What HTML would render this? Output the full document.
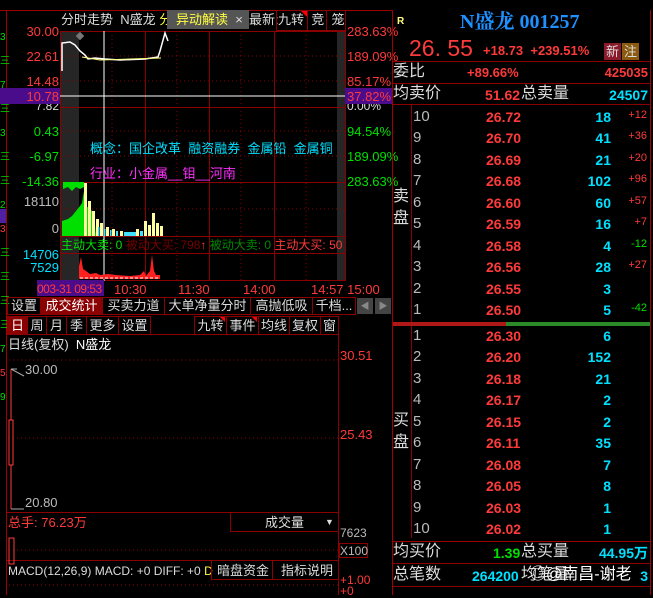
<!DOCTYPE html>
<html><head><meta charset="utf-8"><style>
*{margin:0;padding:0;box-sizing:border-box}
body{width:653px;height:595px;background:#000;overflow:hidden;position:relative;font-family:"Liberation Sans","Noto Sans CJK SC",sans-serif;font-size:13px;color:#ccc}
.a{position:absolute;white-space:nowrap;line-height:1}
.r{color:#ff3a3a}.c{color:#00e0ff}.g{color:#00e000}.w{color:#ddd}.y{color:#ffff40}.m{color:#ff30ff}
.hl{position:absolute;height:1px;background:#8b0000}
.vl{position:absolute;width:1px;background:#8b0000}
.bx{position:absolute;border:1px solid #8b0000}
.tab{position:absolute;top:297px;height:18px;border:1px solid #8b0000;color:#ddd;font-size:13px;line-height:16px;text-align:center}
.t2{position:absolute;top:316px;height:19px;border:1px solid #8b0000;color:#ddd;font-size:13px;line-height:17px;text-align:center}
.row{position:absolute;left:393px;width:258px;height:21px;font-size:14px;font-weight:bold}
.row span{position:absolute;top:3px;line-height:1}
.row span.w{color:#bbb;font-weight:normal;font-size:15px;top:2px}
.lb{position:absolute;left:0;width:59px;text-align:right;font-size:13px;line-height:1}
.rb{position:absolute;left:347px;font-size:13px;line-height:1}
</style></head><body>
<div class="vl" style="left:6px;top:10px;height:585px;background:#a00000"></div>
<div class="hl" style="left:0;top:10px;width:393px;background:#a00000"></div>
<div class="a g" style="left:0;top:26px;font-size:10px;line-height:24px">3<br>三<br>7<br>三<br>3<br>三<br>三<br>2<br><span class="r">3</span><br>三<br>三<br>三<br>三<br>7<br><span class="r">5</span><br>9</div>
<div class="a" style="left:0;top:209px;width:6px;height:14px;background:#5020a0"></div>
<div class="a" style="left:61px;top:31px;width:18px;height:249px;background:#262626"></div>
<div class="a" style="left:337px;top:31px;width:8px;height:249px;background:#262626"></div>
<div class="bx" style="left:60px;top:31px;width:286px;height:250px"></div>
<div class="hl" style="left:60px;top:107px;width:286px"></div>
<div class="hl" style="left:60px;top:182px;width:286px"></div>
<div class="hl" style="left:60px;top:236px;width:286px"></div>
<div class="hl" style="left:60px;top:253px;width:286px"></div>
<div class="vl" style="left:145px;top:31px;height:250px"></div>
<div class="vl" style="left:209px;top:31px;height:250px"></div>
<div class="vl" style="left:274px;top:31px;height:250px"></div>
<svg class="a" style="left:60px;top:31px" width="286" height="250">
<g stroke="#8b0000" stroke-dasharray="1,3"><line x1="0" y1="25" x2="286" y2="25"/><line x1="0" y1="50" x2="286" y2="50"/><line x1="0" y1="100" x2="286" y2="100"/><line x1="0" y1="125" x2="286" y2="125"/><line x1="0" y1="178" x2="286" y2="178"/><line x1="52" y1="0" x2="52" y2="250"/><line x1="117" y1="0" x2="117" y2="250"/><line x1="181" y1="0" x2="181" y2="250"/><line x1="246" y1="0" x2="246" y2="250"/></g>
<line x1="0" y1="65" x2="286" y2="65" stroke="#fff"/>
<line x1="44" y1="0" x2="44" y2="250" stroke="#fff"/>
<rect x="17" y="2" width="6" height="6" fill="#777" transform="rotate(45 20 5)"/>
<polyline points="2,40 2,12 10,11 15,14 20,20 25,24 28,28 35,27 45,28 60,29 85,28 98,26 100,20 105,2 108,10" fill="none" stroke="#fff" stroke-width="1.5"/>
<polyline points="22,26 40,29 70,28 101,27" fill="none" stroke="#ffff80"/>
<g fill="#00e000"><path d="M2,205 L2,190 8,188 12,185 16,180 20,175 22,172 24,160 26,175 30,178 34,182 36,205Z"/><path d="M3,151 L24,151 24,156 20,158 16,156 12,160 8,156 3,158Z"/></g>
<g fill="#ffffa0"><rect x="24" y="152" width="3" height="53"/><rect x="28" y="170" width="3" height="35"/><rect x="32" y="180" width="3" height="25"/><rect x="36" y="188" width="3" height="17"/><rect x="40" y="192" width="3" height="13"/><rect x="46" y="196" width="3" height="9"/><rect x="52" y="198" width="3" height="7"/><rect x="60" y="200" width="3" height="5"/><rect x="76" y="198" width="3" height="7"/><rect x="84" y="190" width="3" height="15"/><rect x="88" y="194" width="3" height="11"/><rect x="92" y="182" width="3" height="23"/><rect x="96" y="192" width="3" height="13"/><rect x="100" y="195" width="3" height="10"/></g>
<g fill="#40e0ff"><rect x="38" y="196" width="1.5" height="9"/><rect x="44" y="198" width="1.5" height="7"/><rect x="50" y="199" width="1.5" height="6"/><rect x="56" y="200" width="2" height="5"/><rect x="64" y="201" width="12" height="4"/><rect x="80" y="200" width="3" height="5"/></g>
<g fill="#ff2020"><path d="M19,248 L19,235 21,226 23,238 26,240 30,243 36,242 40,244 48,243 56,244 70,245 80,244 84,240 86,245 90,240 92,224 94,240 96,244 100,244 100,248Z"/></g>
<line x1="20" y1="247" x2="100" y2="247" stroke="#fff" stroke-dasharray="3,2"/>
</svg>
<div class="a c" style="left:90px;top:142px;font-size:13px">概念：国企改革&nbsp; 融资融券&nbsp; 金属铅&nbsp; 金属铜</div>
<div class="a m" style="left:90px;top:167px;font-size:13px">行业：小金属__钼__河南</div>
<div class="a w" style="left:61px;top:13px;font-size:13px">分时走势 &nbsp;N盛龙 <span class="y">分</span></div>
<div class="a" style="left:167px;top:10px;width:82px;height:19px;background:#555"></div>
<div class="a y" style="left:176px;top:13px;font-size:13px">异动解读&nbsp;&nbsp;<span class="w">×</span></div>
<div class="a w" style="left:249px;top:13px;font-size:13px">最新:</div>
<div class="bx" style="left:276px;top:10px;width:32px;height:21px"></div>
<div class="bx" style="left:307px;top:10px;width:20px;height:21px"></div>
<div class="bx" style="left:326px;top:10px;width:20px;height:21px"></div>
<div class="a w" style="left:278px;top:13px">九转 &nbsp;竞 &nbsp;笼</div>
<div class="a" style="left:301px;top:11px;width:0;height:0;border-left:6px solid transparent;border-top:6px solid #f00"></div>
<div class="lb w" style="top:100px;font-size:12px">7.82</div>
<div class="rb w" style="top:100px;font-size:12px">0.00%</div>
<div class="a" style="left:0;top:88px;width:60px;height:16px;background:#4b0c8c"></div>
<div class="a" style="left:345px;top:88px;width:48px;height:16px;background:#4b0c8c"></div>
<div class="lb r" style="top:25px">30.00</div>
<div class="lb r" style="top:50px">22.61</div>
<div class="lb r" style="top:75px">14.48</div>
<div class="lb r" style="top:90px">10.78</div>
<div class="lb g" style="top:125px">0.43</div>
<div class="lb g" style="top:150px">-6.97</div>
<div class="lb g" style="top:175px">-14.36</div>
<div class="lb" style="top:195px;color:#bbb">18110</div>
<div class="lb" style="top:222px;color:#bbb">0</div>
<div class="lb c" style="top:248px">14706</div>
<div class="lb c" style="top:261px">7529</div>
<div class="rb r" style="top:25px">283.63%</div>
<div class="rb r" style="top:50px">189.09%</div>
<div class="rb r" style="top:75px">85.17%</div>
<div class="rb r" style="top:90px">37.82%</div>
<div class="rb g" style="top:125px">94.54%</div>
<div class="rb g" style="top:150px">189.09%</div>
<div class="rb g" style="top:175px">283.63%</div>
<div class="a" style="left:61px;top:239px;font-size:12px"><span class="g">主动大卖: 0</span> <span style="color:#700">被动大买: 798</span><span class="r">↑</span> <span style="color:#080">被动大卖: 0</span> <span class="r">主动大买: 50</span></div>
<div class="a" style="left:37px;top:280px;width:67px;height:16px;background:#4b0c8c"></div>
<div class="a r" style="left:37px;top:283px;font-size:12px;letter-spacing:-0.5px">003-31 09:53</div>
<div class="a r" style="left:114px;top:283px;font-size:13px">10:30</div>
<div class="a r" style="left:178px;top:283px;font-size:13px">11:30</div>
<div class="a r" style="left:243px;top:283px;font-size:13px">14:00</div>
<div class="a r" style="left:311px;top:283px;font-size:13px">14:57 15:00</div>
<div class="tab" style="left:7px;width:34px">设置</div>
<div class="tab" style="left:40px;width:63px;background:#8b0000;color:#fff">成交统计</div>
<div class="tab" style="left:102px;width:63px">买卖力道</div>
<div class="tab" style="left:164px;width:87px">大单净量分时</div>
<div class="tab" style="left:250px;width:63px">高抛低吸</div>
<div class="tab" style="left:312px;width:44px">千档...</div>
<div class="a" style="left:357px;top:298px;width:16px;height:16px;background:#444;color:#888;font-size:9px;text-align:center;line-height:16px">◀</div>
<div class="a" style="left:375px;top:298px;width:16px;height:16px;background:#444;color:#888;font-size:9px;text-align:center;line-height:16px">▶</div>
<div class="t2" style="left:7px;width:21px;background:#8b0000;color:#fff">日</div>
<div class="t2" style="left:27px;width:20px">周</div>
<div class="t2" style="left:46px;width:21px">月</div>
<div class="t2" style="left:66px;width:21px">季</div>
<div class="t2" style="left:86px;width:33px">更多</div>
<div class="t2" style="left:118px;width:33px">设置</div>
<div class="t2" style="left:194px;width:33px">九转</div>
<div class="t2" style="left:226px;width:33px">事件</div>
<div class="t2" style="left:258px;width:32px">均线</div>
<div class="t2" style="left:289px;width:32px">复权</div>
<div class="t2" style="left:320px;width:19px">窗</div>
<div class="a" style="left:220px;top:317px;border-left:5px solid transparent;border-top:5px solid #f00"></div>
<div class="a" style="left:252px;top:317px;border-left:5px solid transparent;border-top:5px solid #f00"></div>
<div class="vl" style="left:338px;top:334px;height:261px"></div>
<div class="hl" style="left:7px;top:334px;width:331px"></div>
<div class="hl" style="left:7px;top:512px;width:331px"></div>
<div class="hl" style="left:7px;top:560px;width:331px"></div>
<div class="a w" style="left:8px;top:338px">日线(复权) &nbsp;<span style="color:#fff">N盛龙</span></div>
<svg class="a" style="left:7px;top:334px" width="331" height="261">
<g stroke="#8b0000" stroke-dasharray="1,3"><line x1="2" y1="26" x2="331" y2="26"/><line x1="2" y1="104" x2="331" y2="104"/><line x1="2" y1="216" x2="331" y2="216"/><line x1="2" y1="251" x2="331" y2="251"/></g>
<line x1="4" y1="35" x2="4" y2="175" stroke="#ff3a3a"/>
<rect x="2" y="86" width="4" height="45" fill="#000" stroke="#ff3a3a"/>
<path d="M4,35 L10,35 M4,35 L17,42 M4,175 L17,175" stroke="#aaa" fill="none"/>
<rect x="2" y="204" width="5" height="26" fill="none" stroke="#ff3a3a"/>
</svg>
<div class="a" style="left:25px;top:363px;color:#bbb">30.00</div>
<div class="a" style="left:25px;top:496px;color:#bbb">20.80</div>
<div class="a r" style="left:340px;top:349px">30.51</div>
<div class="a r" style="left:340px;top:428px">25.43</div>
<div class="a r" style="left:8px;top:516px">总手: 76.23万</div>
<div class="bx" style="left:230px;top:512px;width:109px;height:20px"></div>
<div class="a w" style="left:265px;top:516px">成交量</div>
<div class="a w" style="left:325px;top:518px;font-size:9px">▼</div>
<div class="a" style="left:340px;top:527px;color:#bbb;font-size:12px">7623</div>
<div class="bx" style="left:339px;top:543px;width:29px;height:15px"></div>
<div class="a" style="left:340px;top:545px;color:#bbb;font-size:12px">X100</div>
<div class="a w" style="left:8px;top:565px;font-size:12px">MACD(12,26,9) MACD: +0 DIFF: +0 <span class="y">D</span></div>
<div class="bx" style="left:211px;top:560px;width:62px;height:20px"></div>
<div class="a w" style="left:217px;top:564px">暗盘资金</div>
<div class="bx" style="left:272px;top:560px;width:67px;height:20px"></div>
<div class="a w" style="left:281px;top:564px">指标说明</div>
<div class="a r" style="left:340px;top:575px;font-size:12px;line-height:11px">+1.00<br>+0</div>
<div class="vl" style="left:392px;top:10px;height:585px;background:#a00000"></div>
<div class="vl" style="left:650px;top:10px;height:585px;background:#a00000"></div>
<div class="a" style="left:397px;top:17px;color:#ffff80;font-size:10px;font-weight:bold">R</div>
<div class="a" style="left:460px;top:12px;color:#1e90ff;font-size:20px;font-weight:bold;font-family:'Liberation Serif','Noto Serif CJK SC',serif">N盛龙 001257</div>
<div class="a r" style="left:409px;top:37px;font-size:23px">26. 55</div>
<div class="a r" style="left:483px;top:44px;font-size:13px;font-weight:bold">+18.73 &nbsp;+239.51%</div>
<div class="a" style="left:604px;top:43px;width:17px;height:17px;background:#8b1a2a;color:#ddd;font-size:13px;line-height:17px;text-align:center">新</div>
<div class="a" style="left:622px;top:43px;width:17px;height:17px;background:#8b5a10;color:#ddd;font-size:13px;line-height:17px;text-align:center">注</div>
<div class="hl" style="left:393px;top:61px;width:258px"></div>
<div class="hl" style="left:393px;top:83px;width:258px"></div>
<div class="hl" style="left:393px;top:104px;width:258px"></div>
<div class="a w" style="left:393px;top:64px;font-size:16px">委比</div>
<div class="a r" style="left:467px;top:66px;font-size:13px;font-weight:bold">+89.66%</div>
<div class="a r" style="right:5px;top:66px;font-size:13px;font-weight:bold">425035</div>
<div class="a w" style="left:393px;top:86px;font-size:16px">均卖价</div>
<div class="a r" style="left:485px;top:88px;font-size:14px;font-weight:bold">51.62</div>
<div class="a w" style="left:521px;top:86px;font-size:16px">总卖量</div>
<div class="a c" style="right:5px;top:88px;font-size:14px;font-weight:bold">24507</div>
<div class="vl" style="left:411px;top:104px;height:434px"></div>
<div class="a w" style="left:393px;top:186px;font-size:16px;line-height:22px">卖<br>盘</div>
<div class="a w" style="left:393px;top:410px;font-size:16px;line-height:22px">买<br>盘</div>
<div class="a" style="left:393px;top:322px;width:113px;height:4px;background:#b01818"></div>
<div class="a" style="left:506px;top:322px;width:144px;height:4px;background:#2a8a2a"></div>
<div class="row" style="top:107px"><span class="w" style="left:20px">10</span><span class="r" style="left:93px">26.72</span><span class="c" style="right:40px">18</span><span class="r" style="right:4px;font-size:11px;font-weight:normal">+12</span></div>
<div class="row" style="top:128px"><span class="w" style="left:20px">9</span><span class="r" style="left:93px">26.70</span><span class="c" style="right:40px">41</span><span class="r" style="right:4px;font-size:11px;font-weight:normal">+36</span></div>
<div class="row" style="top:150px"><span class="w" style="left:20px">8</span><span class="r" style="left:93px">26.69</span><span class="c" style="right:40px">21</span><span class="r" style="right:4px;font-size:11px;font-weight:normal">+20</span></div>
<div class="row" style="top:171px"><span class="w" style="left:20px">7</span><span class="r" style="left:93px">26.68</span><span class="c" style="right:40px">102</span><span class="r" style="right:4px;font-size:11px;font-weight:normal">+96</span></div>
<div class="row" style="top:193px"><span class="w" style="left:20px">6</span><span class="r" style="left:93px">26.60</span><span class="c" style="right:40px">60</span><span class="r" style="right:4px;font-size:11px;font-weight:normal">+57</span></div>
<div class="row" style="top:214px"><span class="w" style="left:20px">5</span><span class="r" style="left:93px">26.59</span><span class="c" style="right:40px">16</span><span class="r" style="right:4px;font-size:11px;font-weight:normal">+7</span></div>
<div class="row" style="top:236px"><span class="w" style="left:20px">4</span><span class="r" style="left:93px">26.58</span><span class="c" style="right:40px">4</span><span class="g" style="right:4px;font-size:11px;font-weight:normal">-12</span></div>
<div class="row" style="top:257px"><span class="w" style="left:20px">3</span><span class="r" style="left:93px">26.56</span><span class="c" style="right:40px">28</span><span class="r" style="right:4px;font-size:11px;font-weight:normal">+27</span></div>
<div class="row" style="top:279px"><span class="w" style="left:20px">2</span><span class="r" style="left:93px">26.55</span><span class="c" style="right:40px">3</span></div>
<div class="row" style="top:300px"><span class="w" style="left:20px">1</span><span class="r" style="left:93px">26.50</span><span class="c" style="right:40px">5</span><span class="g" style="right:4px;font-size:11px;font-weight:normal">-42</span></div>
<div class="row" style="top:326px"><span class="w" style="left:20px">1</span><span class="r" style="left:93px">26.30</span><span class="c" style="right:40px">6</span></div>
<div class="row" style="top:347px"><span class="w" style="left:20px">2</span><span class="r" style="left:93px">26.20</span><span class="c" style="right:40px">152</span></div>
<div class="row" style="top:369px"><span class="w" style="left:20px">3</span><span class="r" style="left:93px">26.18</span><span class="c" style="right:40px">21</span></div>
<div class="row" style="top:390px"><span class="w" style="left:20px">4</span><span class="r" style="left:93px">26.17</span><span class="c" style="right:40px">2</span></div>
<div class="row" style="top:412px"><span class="w" style="left:20px">5</span><span class="r" style="left:93px">26.15</span><span class="c" style="right:40px">2</span></div>
<div class="row" style="top:433px"><span class="w" style="left:20px">6</span><span class="r" style="left:93px">26.11</span><span class="c" style="right:40px">35</span></div>
<div class="row" style="top:455px"><span class="w" style="left:20px">7</span><span class="r" style="left:93px">26.08</span><span class="c" style="right:40px">7</span></div>
<div class="row" style="top:476px"><span class="w" style="left:20px">8</span><span class="r" style="left:93px">26.05</span><span class="c" style="right:40px">8</span></div>
<div class="row" style="top:498px"><span class="w" style="left:20px">9</span><span class="r" style="left:93px">26.03</span><span class="c" style="right:40px">1</span></div>
<div class="row" style="top:519px"><span class="w" style="left:20px">10</span><span class="r" style="left:93px">26.02</span><span class="c" style="right:40px">1</span></div>
<div class="hl" style="left:393px;top:541px;width:258px;background:#a00000"></div>
<div class="hl" style="left:393px;top:563px;width:258px"></div>
<div class="hl" style="left:393px;top:586px;width:258px"></div>
<div class="a w" style="left:393px;top:544px;font-size:16px">均买价</div>
<div class="a g" style="left:493px;top:546px;font-size:14px;font-weight:bold">1.39</div>
<div class="a w" style="left:521px;top:544px;font-size:16px">总买量</div>
<div class="a c" style="right:5px;top:546px;font-size:14px;font-weight:bold">44.95万</div>
<div class="a w" style="left:393px;top:567px;font-size:16px">总笔数</div>
<div class="a c" style="left:472px;top:569px;font-size:14px;font-weight:bold">264200</div>
<div class="a w" style="left:521px;top:567px;font-size:16px">均笔量</div>
<div class="a c" style="right:5px;top:569px;font-size:14px;font-weight:bold">3</div>
<div class="a" style="left:530px;top:567px;font-size:16px;color:#fff">◎@南昌-谢老</div>
</body></html>
